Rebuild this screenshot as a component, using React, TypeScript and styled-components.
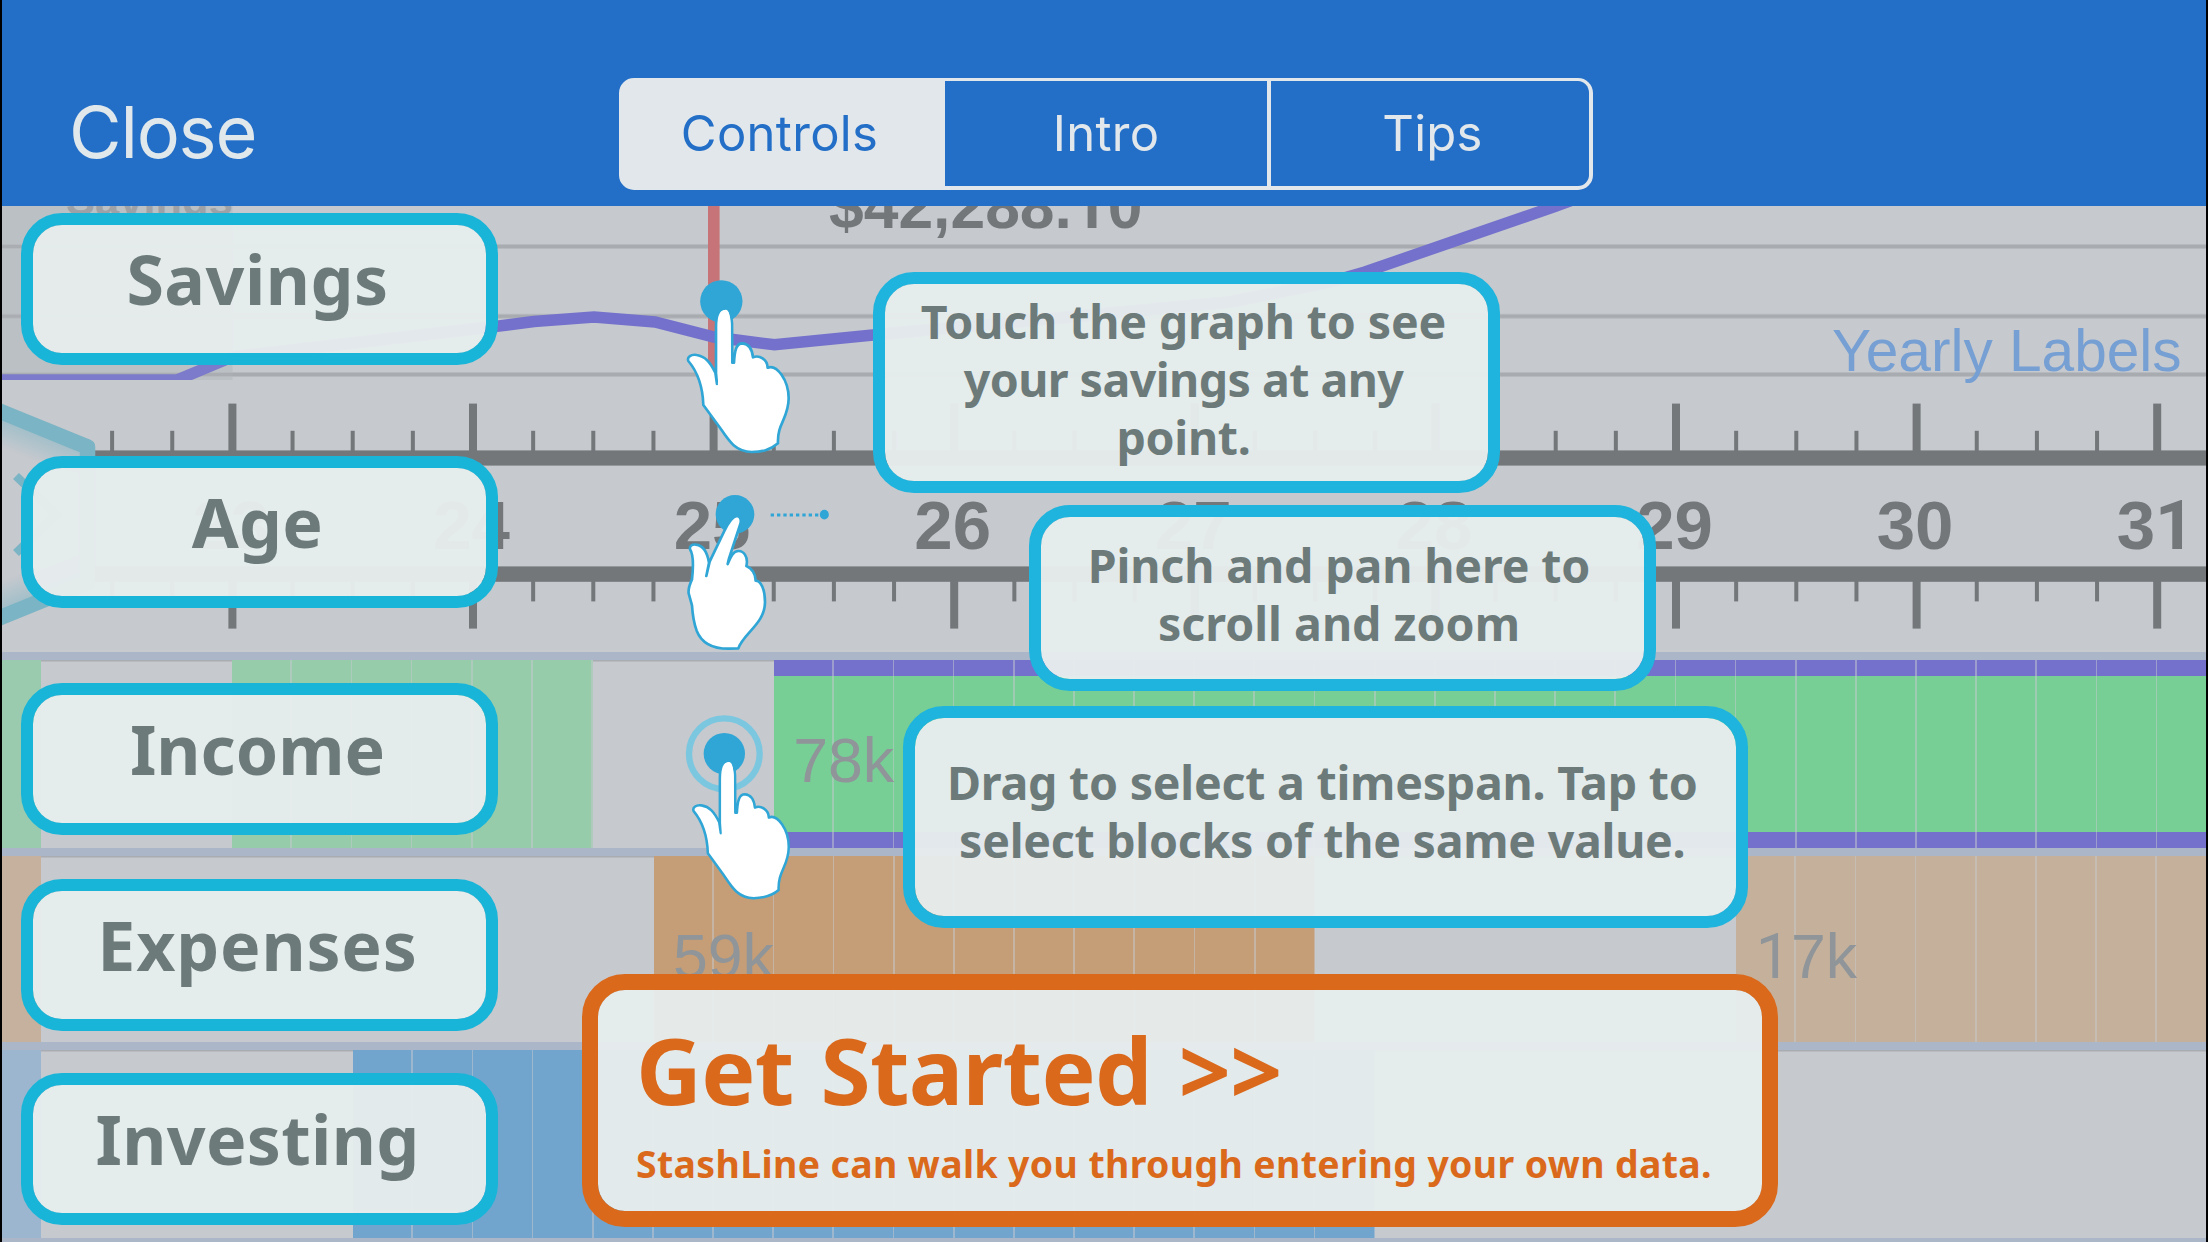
import React from "react";
import styled, { createGlobalStyle } from "styled-components";

const Global = createGlobalStyle`
  * { box-sizing: border-box; }
  html, body { margin: 0; padding: 0; background: #000; }
  body { width: 2208px; height: 1242px; overflow: hidden; }
`;

const UI = `Inter, "Liberation Sans", sans-serif`;
const HELV = `"Liberation Sans", Arial, sans-serif`;
const FOOTLESS = `Roboto, "Liberation Sans", sans-serif`;
const HUMAN = `"Noto Sans", "Open Sans", sans-serif`;

const PURPLE = "#7371cc";
const INK = "#73777a";
const TOUCH = "#30a6d6";

const Screen = styled.div`
  position: relative;
  width: 2208px;
  height: 1242px;
  display: flex;
  flex-direction: column;
  border: 0 solid #000;
  border-width: 0 2px;
  background: #c6c9ce;
  overflow: hidden;
`;

/* ---------- header ---------- */

const Header = styled.header`
  flex: none;
  display: grid;
  grid-template-columns: 617px 974px 1fr;
  height: 206px;
  padding-top: 78px;
  background: #236fc8;
`;

const CloseButton = styled.button`
  height: 108px;
  padding: 0 0 0 67px;
  border: 0;
  background: none;
  color: #e1e8ec;
  font: 370 72px/108px ${UI};
  letter-spacing: -1.2px;
  text-align: left;
`;

const Segments = styled.div`
  display: grid;
  grid-template-columns: 318px 322px 318px;
  column-gap: 4px;
  height: 112px;
  border: 4px solid #e1e7eb;
  border-top-width: 3.5px;
  border-radius: 15px;
  background: #e1e7eb;
  overflow: hidden;
`;

const Segment = styled.button<{ $active?: boolean; $shift?: number }>`
  margin: 0;
  padding: 0 ${(p) => (p.$active ? 5 : 0)}px 0 ${(p) => p.$shift ?? 0}px;
  border: 0;
  background: ${(p) => (p.$active ? "#e1e7eb" : "#236fc8")};
  color: ${(p) => (p.$active ? "#236fc8" : "#e1e7eb")};
  font: 400 49px/105px ${UI};
  letter-spacing: 0.3px;
  text-align: center;
`;

/* ---------- timeline ---------- */

const GraphSvg = styled.svg`
  flex: none;
  display: block;
  width: 2204px;
  height: 184px;
`;

const RulerSvg = styled.svg`
  flex: none;
  display: block;
  width: 2204px;
  height: 262px;
`;

const Lane = styled.section<{ $h: number }>`
  flex: none;
  display: flex;
  height: ${(p) => p.$h}px;
  border-top: 8px solid #abb7c8;
  box-shadow: inset 0 1.5px 0 #a9acb1;
`;

const Span = styled.div<{ $w: number; $color?: string; $selected?: boolean }>`
  flex: none;
  width: ${(p) => p.$w}px;
  background-color: ${(p) => p.$color ?? "transparent"};
  background-image: ${(p) =>
      p.$color && p.$w > 60
        ? `repeating-linear-gradient(90deg, transparent 0 58.4px, rgba(198,201,206,.5) 58.4px 60.15px)`
        : "none"}
    ${(p) =>
      p.$selected
        ? `, linear-gradient(${PURPLE} 0 16px, transparent 16px calc(100% - 16px), ${PURPLE} calc(100% - 16px))`
        : ""};
`;

const Amount = styled.span`
  display: block;
  padding: 65px 0 0 19.5px;
  color: #8f9598;
  font: 400 62.6px/70px ${HELV};
`;

const One = styled.span`
  font-family: ${FOOTLESS};
`;

/* ---------- overlay ---------- */

const Card = styled.div`
  position: absolute;
  border: 12px solid #19b5d9;
  border-radius: 41px;
  background: rgba(230, 236, 236, 0.968);
  background-clip: padding-box;
  color: #6c7a7a;
  font-family: ${HUMAN};
  font-weight: 700;
  text-align: center;
  white-space: nowrap;
`;

const Label = styled(Card)<{ $top: number; $ls?: number }>`
  left: 19px;
  top: ${(p) => p.$top}px;
  width: 477px;
  height: 152px;
  padding: 1px 4px 0 0;
  font-size: 68px;
  line-height: 106px;
  letter-spacing: ${(p) => p.$ls ?? 0.3}px;
`;

const Bubble = styled(Card)<{ $x: number; $y: number; $w: number; $h: number; $pad: number }>`
  left: ${(p) => p.$x}px;
  top: ${(p) => p.$y}px;
  width: ${(p) => p.$w}px;
  height: ${(p) => p.$h}px;
  padding: ${(p) => p.$pad}px 6px 0 0;
  border-color: #1fb4dd;
  font-size: 46.5px;
  line-height: 58.2px;
`;

const Line = styled.span<{ $ls: number }>`
  display: block;
  letter-spacing: ${(p) => p.$ls}px;
`;

const StartCard = styled(Card)`
  left: 580px;
  top: 974px;
  width: 1196px;
  height: 253px;
  padding: 30px 0 0 38px;
  border: 16px solid #da691c;
  border-radius: 43px;
  color: #da691c;
  text-align: left;
`;

const StartTitle = styled.div`
  font-size: 91px;
  line-height: 100px;
  letter-spacing: -0.7px;
  word-spacing: 4px;
`;

const StartText = styled.div`
  margin-top: 18.5px;
  font-size: 37.4px;
  line-height: 50px;
  letter-spacing: 0.38px;
`;

const Gesture = styled.svg<{ $top: number; $h: number }>`
  position: absolute;
  left: 658px;
  top: ${(p) => p.$top}px;
  width: 200px;
  height: ${(p) => p.$h}px;
`;

const TICK0 = 230.4;
const QUARTER = 60.15;

function SavingsGraph() {
  return (
    <GraphSvg viewBox="2 206 2204 184">
      <defs>
        <clipPath id="plot">
          <rect x="2" y="206" width="2204" height="174" />
        </clipPath>
      </defs>
      <rect x="2" y="206" width="230.5" height="174" fill="#bbc1c4" />
      {[246.5, 316.3, 374.5].map((y) => (
        <g key={y}>
          <rect x="2" y={y - 2.5} width="2204" height="5" fill="#b6babe" />
          <rect x="2" y={y - 1.5} width="2204" height="3" fill="#a8acb0" />
        </g>
      ))}
      <text x="66" y="215" fontFamily={HELV} fontSize="43.5" fontWeight="700" fill="#9a9fa2">
        Savings
      </text>
      <g clipPath="url(#plot)">
        <rect x="708" y="206" width="11.6" height="174" fill="#c77479" />
        <path
          d="M2 380H177L232 357L499 326L534 321.5L594 317L655 322L714 337L774.5 344.8L873 335L1080 316L1230 302L1330 282L1365 272L1472 235L1556 206L1600 190"
          fill="none"
          stroke={PURPLE}
          strokeWidth="11.5"
        />
        <rect x="2" y="206" width="230.5" height="174" fill="#bbc1c4" opacity=".12" />
      </g>
      <text x="829" y="227.6" fontFamily={HELV} fontSize="62.4" fontWeight="700" fill={INK}>
        $42,288.<tspan fontFamily={FOOTLESS}>1</tspan>0
      </text>
      <text x="1832" y="370.7" fontFamily={HELV} fontSize="58.6" fill="#769fd3">
        Yearly Labels
      </text>
    </GraphSvg>
  );
}

function Ruler() {
  const ticks = Array.from({ length: 35 }, (_, i) => i - 2);
  return (
    <RulerSvg viewBox="0 390 2204 262">
      <defs>
        <linearGradient id="glowTop" gradientUnits="userSpaceOnUse" x1="40" y1="434" x2="30" y2="460">
          <stop offset="0" stopColor="#7bb4c4" stopOpacity=".5" />
          <stop offset="1" stopColor="#7bb4c4" stopOpacity="0" />
        </linearGradient>
        <linearGradient id="glowBottom" gradientUnits="userSpaceOnUse" x1="40" y1="595" x2="30" y2="569">
          <stop offset="0" stopColor="#7bb4c4" stopOpacity=".5" />
          <stop offset="1" stopColor="#7bb4c4" stopOpacity="0" />
        </linearGradient>
      </defs>
      <g fill={INK}>
        <rect x="93" y="450.4" width="2111" height="15.2" />
        <rect x="93" y="566.4" width="2111" height="15.4" />
        {ticks.map((i) => {
          const x = TICK0 + i * QUARTER;
          const major = i % 4 === 0;
          const w = major ? 8 : 4;
          return (
            <g key={i}>
              <rect x={x - w / 2} y={major ? 403.6 : 430.8} width={w} height={major ? 48 : 21} />
              <rect x={x - w / 2} y={581} width={w} height={major ? 47.6 : 20.4} />
            </g>
          );
        })}
      </g>
      {["23", "24", "25", "26", "27", "28", "29", "30", "31"].map((n, i) => (
        <text
          key={n}
          x={TICK0 + i * 4 * QUARTER - 1.5}
          y="549"
          fontFamily={HELV}
          fontSize="69"
          fontWeight="700"
          textAnchor="middle"
          fill={INK}
        >
          {n === "31" ? (
            <>
              3<tspan fontFamily={FOOTLESS}>1</tspan>
            </>
          ) : (
            n
          )}
        </text>
      ))}
      <path d="M-10 408L85 447V514H-10Z" fill="url(#glowTop)" />
      <path d="M-10 621L85 582V515H-10Z" fill="url(#glowBottom)" />
      <path
        d="M-10 408L85.5 447V582L-10 621"
        fill="none"
        stroke="#7bb4c4"
        strokeWidth="15.5"
        strokeLinejoin="round"
      />
      <path d="M14 476L54 514.5L14 553" fill="none" stroke="#7bb4c4" strokeWidth="8.5" />
    </RulerSvg>
  );
}

const HAND =
  "M171 372L166 338C150 305 135 289 110 285C94 282 80 291 85 303C112 335 128 375 130 435L180 503C205 540 225 575 275 576C305 575 330 571 354 550C351 490 386 475 386 415C386 360 350 312 323 323C322 298 298 284 279 292C276 264 264 251 247 250C230 250 224 268 222 308L217 308L216 190C214 160 206 146 195 146C178 146 168 165 168 200L168 340Z";
const POINTING_HAND =
  "M139 948L147 908C141 872 125 856 108 854C96 852 88 858 90 868C104 890 98 940 96 958C88 975 84 985 86 1000L96 1036C98 1070 102 1090 110 1112C128 1158 175 1166 205 1166L235 1165C250 1120 316 1090 315 1025C315 990 303 962 287 962C287 942 275 924 259 918C266 890 250 872 235 873C218 874 212 892 203 912L207 895L240 795C246 778 240 768 230 768C216 770 205 788 192 815L149 905Z";
const FINGER = "M197 149C180 149 174 175 174 210V375L186 385L212 320V205C212 170 207 149 197 149Z";

const handStyle = {
  fill: "#fff",
  stroke: TOUCH,
  strokeWidth: 8,
  strokeLinejoin: "round" as const,
};

export default function App() {
  return (
    <>
      <Global />
      <Screen>
        <Header>
          <CloseButton>Close</CloseButton>
          <Segments>
            <Segment $active>Controls</Segment>
            <Segment>Intro</Segment>
            <Segment $shift={5}>Tips</Segment>
          </Segments>
        </Header>

        <SavingsGraph />
        <Ruler />

        <Lane $h={196}>
          <Span $w={38.5} $color="#9acbae" />
          <Span $w={191.9} />
          <Span $w={360.9} $color="#97ccab" />
          <Span $w={180.45} />
          <Span $w={1432.3} $color="#77cf96" $selected>
            <Amount>78k</Amount>
          </Span>
        </Lane>
        <Lane $h={194}>
          <Span $w={38.5} $color="#c5b19d" />
          <Span $w={613} />
          <Span $w={661.65} $color="#c59e78">
            <Amount>59k</Amount>
          </Span>
          <Span $w={421.05} />
          <Span $w={469.8} $color="#c5b09b">
            <Amount>
              <One>1</One>7k
            </Amount>
          </Span>
        </Lane>
        <Lane $h={196}>
          <Span $w={38.5} $color="#9bb6ce" />
          <Span $w={312.2} />
          <Span $w={1022.55} $color="#72a5ce" />
        </Lane>
        <Lane $h={8} />

        <Label $top={213} $ls={0.5}>Savings</Label>
        <Label $top={456}>Age</Label>
        <Label $top={683} $ls={0}>Income</Label>
        <Label $top={879} $ls={0.8}>Expenses</Label>
        <Label $top={1073}>Investing</Label>

        <Bubble $x={871} $y={271.5} $w={627} $h={221} $pad={8}>
          <Line $ls={-0.14}>Touch the graph to see</Line>
          <Line $ls={-0.55}>your savings at any</Line>
          <Line $ls={-0.3}>point.</Line>
        </Bubble>
        <Bubble $x={1026.5} $y={504.5} $w={627} $h={186.5} $pad={19.5}>
          <Line $ls={-0.14}>Pinch and pan here to</Line>
          <Line $ls={0}>scroll and zoom</Line>
        </Bubble>
        <Bubble $x={900.5} $y={706} $w={845.5} $h={221.5} $pad={35}>
          <Line $ls={-0.24}>Drag to select a timespan. Tap to</Line>
          <Line $ls={-0.26}>select blocks of the same value.</Line>
        </Bubble>

        <StartCard>
          <StartTitle>Get Started &gt;&gt;</StartTitle>
          <StartText>StashLine can walk you through entering your own data.</StartText>
        </StartCard>

        <Gesture $top={260} $h={400} viewBox="0 0 600 1200">
          <circle cx="184" cy="124" r="63.5" fill={TOUCH} />
          <path d={HAND} {...handStyle} />
          <path d={FINGER} fill="#fff" />
          <circle cx="225" cy="763" r="58" fill={TOUCH} />
          <path d={POINTING_HAND} {...handStyle} />
          <path d="M332 765H476" stroke={TOUCH} strokeWidth="9" strokeDasharray="10 9" />
          <ellipse cx="493" cy="764" rx="13.5" ry="14.5" fill={TOUCH} />
        </Gesture>
        <Gesture $top={700} $h={220} viewBox="0 0 600 660">
          <circle cx="193" cy="161" r="106" fill="none" stroke="#7cc7e0" strokeWidth="19" />
          <circle cx="193" cy="161" r="62" fill={TOUCH} />
          <g transform="translate(20.3 43.1) scale(.948 .958)">
            <path d={HAND} {...handStyle} />
            <path d={FINGER} fill="#fff" />
          </g>
        </Gesture>
      </Screen>
    </>
  );
}
